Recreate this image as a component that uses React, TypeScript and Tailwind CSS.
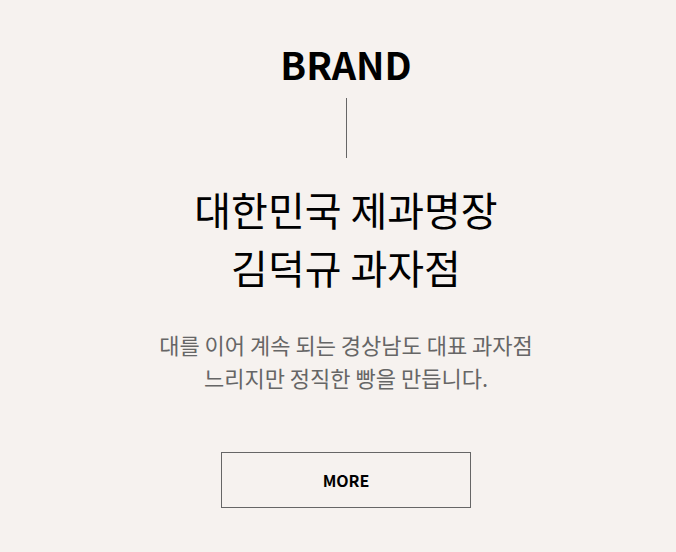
import React from "react";

const App = () => {
  return (
    <div
      className="w-full min-h-[552px] bg-[#f6f2ef] flex flex-col items-center pt-[38px] pl-[16px] text-center"
      style={{ fontFamily: '"Noto Sans CJK KR", "Noto Sans", sans-serif' }}
    >
      <h2 className="text-[38px] leading-[52px] font-bold text-black">BRAND</h2>
      <span className="block w-px h-[60px] bg-[#666] mt-[8px]"></span>
      <p className="mt-[22px] text-[40px] leading-[58px] text-black">
        대한민국 제과명장
        <br />
        김덕규 과자점
      </p>
      <p className="mt-[32px] text-[22px] leading-[33px] text-[#666]">
        대를 이어 계속 되는 경상남도 대표 과자점
        <br />
        느리지만 정직한 빵을 만듭니다.
      </p>
      <button className="mt-[58px] w-[250px] h-[56px] border border-[#666] text-[16px] font-bold text-black">
        MORE
      </button>
    </div>
  );
};

export default App;
